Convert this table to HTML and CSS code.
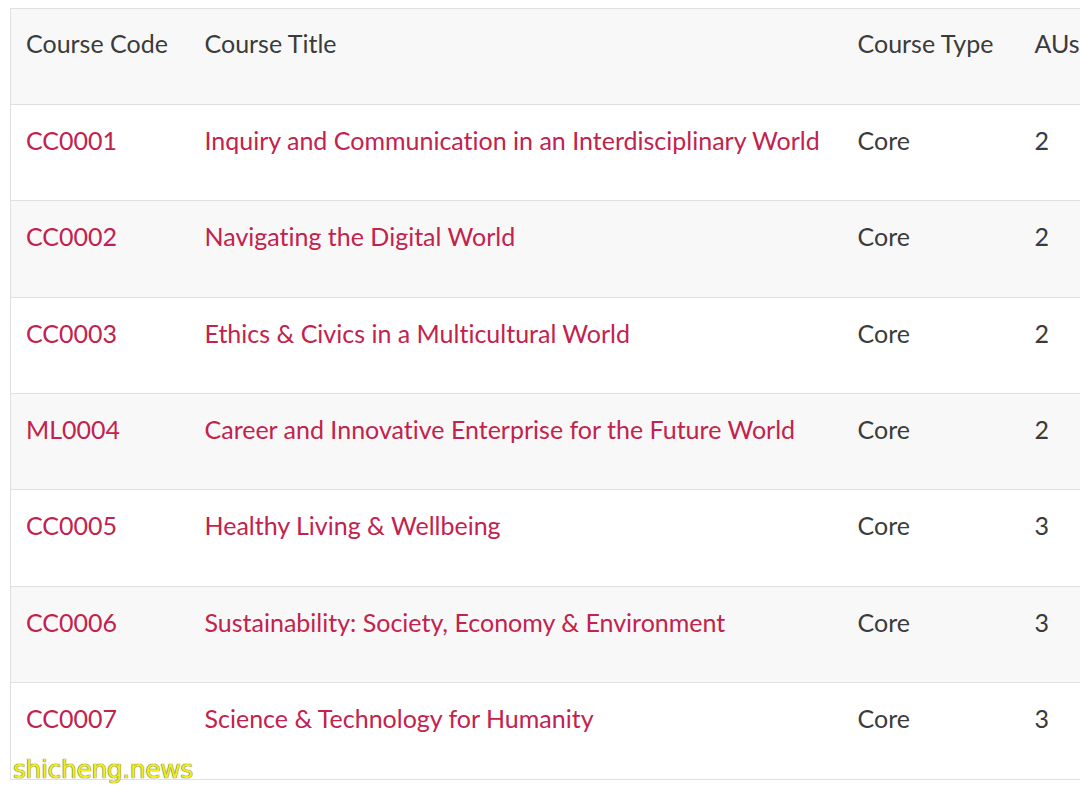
FILE: index.html
```html
<!DOCTYPE html>
<html lang="en">
<head>
<meta charset="utf-8">
<title>Courses</title>
<link rel="stylesheet" href="styles.css">
</head>
<body>
<div class="page">
  <table class="courses">
    <colgroup>
      <col class="c-code">
      <col class="c-title">
      <col class="c-type">
      <col class="c-au">
    </colgroup>
    <thead>
      <tr><th>Course Code</th><th>Course Title</th><th>Course Type</th><th>AUs</th></tr>
    </thead>
    <tbody>
      <tr><td class="link">CC0001</td><td class="link">Inquiry and Communication in an Interdisciplinary World</td><td>Core</td><td>2</td></tr>
      <tr><td class="link">CC0002</td><td class="link">Navigating the Digital World</td><td>Core</td><td>2</td></tr>
      <tr><td class="link">CC0003</td><td class="link">Ethics &amp; Civics in a Multicultural World</td><td>Core</td><td>2</td></tr>
      <tr><td class="link">ML0004</td><td class="link">Career and Innovative Enterprise for the Future World</td><td>Core</td><td>2</td></tr>
      <tr><td class="link">CC0005</td><td class="link">Healthy Living &amp; Wellbeing</td><td>Core</td><td>3</td></tr>
      <tr><td class="link">CC0006</td><td class="link">Sustainability: Society, Economy &amp; Environment</td><td>Core</td><td>3</td></tr>
      <tr><td class="link">CC0007</td><td class="link">Science &amp; Technology for Humanity</td><td>Core</td><td>3</td></tr>
    </tbody>
  </table>
  <div class="watermark">shicheng.news</div>
</div>
</body>
</html>
```

FILE: styles.css
```css
html, body {
  margin: 0;
  padding: 0;
  background: #fff;
  overflow: hidden;
}
.page {
  position: relative;
  width: 1080px;
  height: 790px;
  overflow: hidden;
  padding: 7.5px 0 0 10px;
  box-sizing: border-box;
}
.courses {
  border-collapse: collapse;
  table-layout: fixed;
  width: 1140px;
  font-family: Lato, "Open Sans", sans-serif;
  font-size: 25px;
  line-height: 36px;
  font-variant-ligatures: none;
  color: #3b3b3b;
  border: 1px solid #e0e0e0;
}
.c-code { width: 179px; }
.c-title { width: 653px; }
.c-type { width: 177px; }
.c-au { width: 131px; }
.courses th, .courses td {
  text-align: left;
  vertical-align: top;
  font-weight: normal;
  padding: 17px 15px 42.4px 15px;
  border-bottom: 1px solid #e0e0e0;
  white-space: nowrap;
}
.courses thead th {
  padding-top: 16px;
  padding-bottom: 43.4px;
  background: #f8f8f8;
}
.courses tbody tr:nth-child(even) td {
  background: #f8f8f8;
}
.courses td.link {
  color: #c3224c;
}
.watermark {
  position: absolute;
  left: 13px;
  bottom: 6px;
  font-family: "DejaVu Sans", sans-serif;
  font-size: 25px;
  line-height: 28px;
  color: #f0ee1c;
  text-shadow: 0 0 1px #5e5e1a, 0 0 1px #5e5e1a;
  letter-spacing: -0.4px;
}
```
